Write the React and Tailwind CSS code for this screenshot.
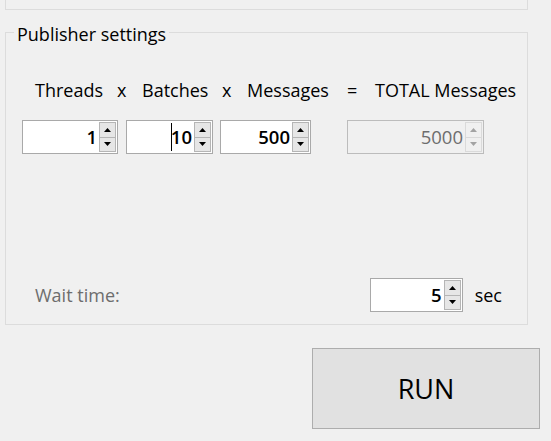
import React from "react";

function Arrow({ up, color }) {
  return (
    <svg width="7" height="4" viewBox="0 0 7 4">
      {up ? (
        <polygon points="0,4 7,4 3.5,0" fill={color} />
      ) : (
        <polygon points="0,0 7,0 3.5,4" fill={color} />
      )}
    </svg>
  );
}

function Spin({ value, disabled, cursor, className }) {
  const arrow = disabled ? "#a3a3a3" : "#000000";
  return (
    <div
      className={`flex h-[34px] border ${
        disabled ? "border-[#bcbcbc] bg-[#f0f0f0]" : "border-[#a9a9a9] bg-white"
      } ${className}`}
    >
      <div
        className={`flex-1 flex items-center justify-end pr-[2px] text-[18.5px] leading-[24px] ${
          disabled ? "text-[#6d6d6d]" : "text-black font-semibold"
        }`}
      >
        {cursor && <span className="w-[1px] h-[28px] bg-black mr-[-1px]" />}
        <span>{value}</span>
      </div>
      <div className="flex flex-col w-[17px] my-[1px] mr-[1px]">
        <div
          className={`flex-1 flex items-center justify-center border ${
            disabled ? "border-[#dadada] bg-[#f0f0f0]" : "border-[#b5b5b5] bg-[#e6e6e6]"
          }`}
        >
          <Arrow up color={arrow} />
        </div>
        <div
          className={`flex-1 flex items-center justify-center border border-t-0 ${
            disabled ? "border-[#dadada] bg-[#f0f0f0]" : "border-[#b5b5b5] bg-[#e6e6e6]"
          }`}
        >
          <Arrow color={arrow} />
        </div>
      </div>
    </div>
  );
}

export default function App() {
  return (
    <div
      className="w-[551px] h-[441px] bg-[#f0f0f0] overflow-hidden text-black"
      style={{ fontFamily: '"Open Sans", "Noto Sans", sans-serif' }}
    >
      <div className="ml-[5px] w-[523px] h-[10px] border-x border-b border-[#dcdcdc]" />

      <div className="relative mt-[22px] ml-[5px] w-[523px] h-[293px] border border-[#dcdcdc] flex flex-col">
        <span className="absolute left-[8px] top-[-11px] px-[3px] bg-[#f0f0f0] text-[18px] leading-[24px]">
          Publisher settings
        </span>

        <div className="flex mt-[45px] text-[18px] leading-[24px]">
          <span className="ml-[29px] w-[82px]">Threads</span>
          <span className="w-[25px]">x</span>
          <span className="w-[80px]">Batches</span>
          <span className="w-[25px]">x</span>
          <span className="w-[100px]">Messages</span>
          <span className="w-[28px]">=</span>
          <span>TOTAL Messages</span>
        </div>

        <div className="flex mt-[18px]">
          <Spin value="1" className="ml-[16px] w-[96px]" />
          <Spin value="10" cursor className="ml-[8px] w-[87px]" />
          <Spin value="500" className="ml-[7px] w-[91px]" />
          <Spin value="5000" disabled className="ml-[36px] w-[137px]" />
        </div>

        <div className="flex items-center mt-[124px]">
          <span className="ml-[29px] text-[18px] leading-[24px] text-[#6d6d6d]">Wait time:</span>
          <div className="flex-1" />
          <Spin value="5" className="w-[93px] h-[34px]" />
          <span className="ml-[12px] mr-[25px] text-[18px] leading-[24px]">sec</span>
        </div>
      </div>

      <button className="mt-[23px] ml-[312px] w-[228px] h-[81px] bg-[#e1e1e1] border border-[#adadad] flex items-center justify-center text-[27px] leading-[36px]">
        RUN
      </button>
    </div>
  );
}
